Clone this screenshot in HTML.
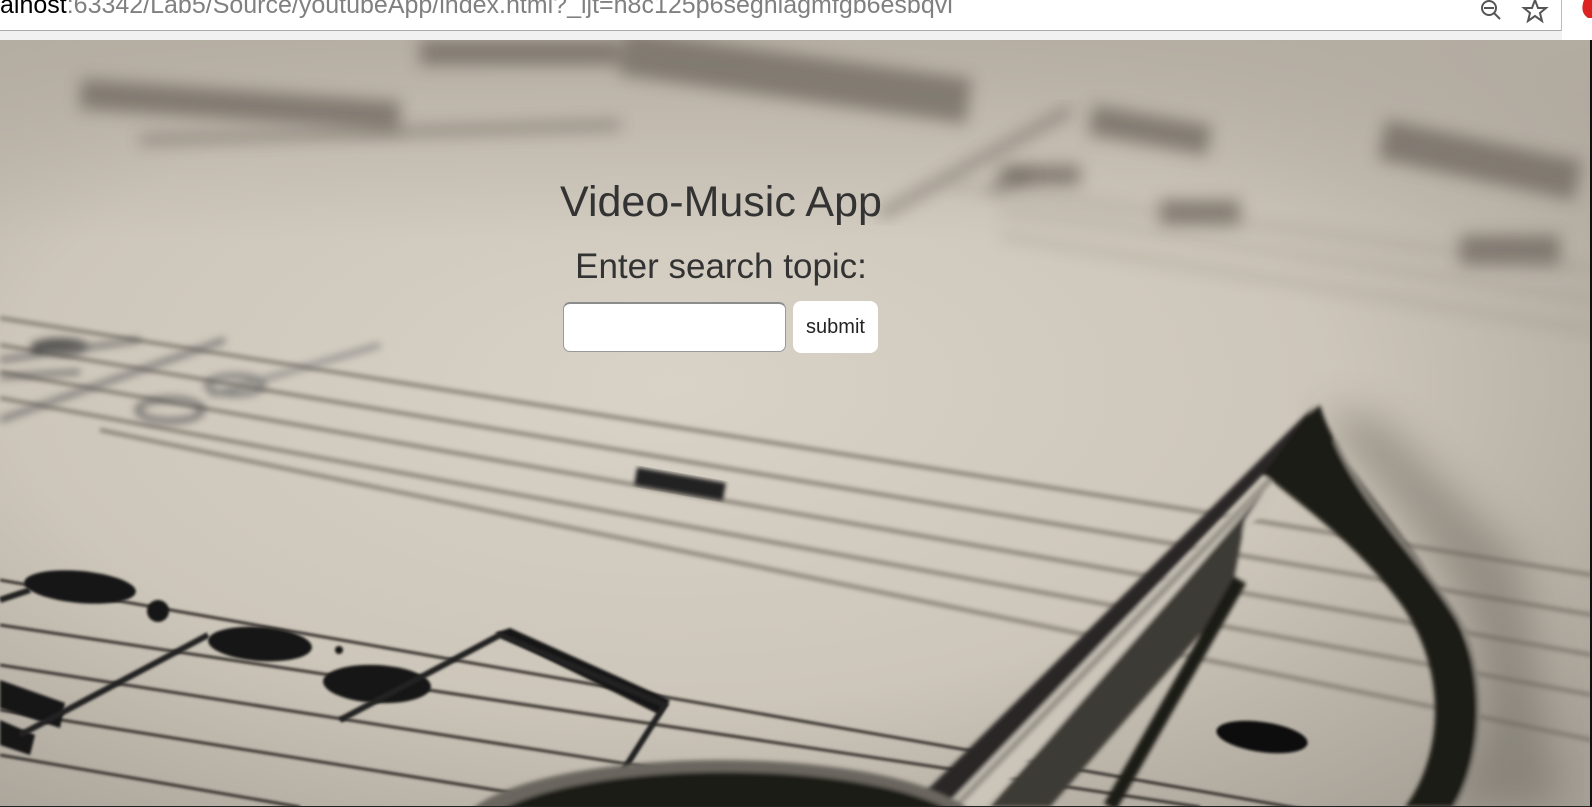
<!DOCTYPE html>
<html><head><meta charset="utf-8"><style>
html,body{margin:0;padding:0;width:1592px;height:807px;overflow:hidden;background:#fff;font-family:"Liberation Sans",Arial,sans-serif}
#bar{position:absolute;left:0;top:0;width:1592px;height:40px;background:#fff}
#url{position:absolute;left:0;top:-9px;font-size:25px;color:#808080;white-space:nowrap;letter-spacing:0}
#url b{font-weight:normal;color:#000}
#bar .strip{position:absolute;left:0;top:30px;width:1562px;height:10px;background:#f1f1f1;border-top:1px solid #a9a9a9;box-sizing:border-box}
#bar .edge{position:absolute;left:1561px;top:0;width:1px;height:31px;background:#bbb}
#bg{position:absolute;left:0;top:40px;width:1592px;height:767px;overflow:hidden}
#bg svg{display:block}
h1{position:absolute;left:0;width:1442px;top:177px;margin:0;text-align:center;font-weight:normal;font-size:43px;line-height:50px;color:#333}
.lab{position:absolute;left:0;width:1442px;top:247px;text-align:center;font-size:35px;line-height:40px;color:#333}
.inp{position:absolute;left:563px;top:302px;width:223px;height:50px;background:#fff;border-radius:7px;border:1px solid #999;border-top:2px solid #8c8c8c;box-sizing:border-box}
.btn{position:absolute;left:793px;top:301px;width:85px;height:52px;background:#fff;border-radius:8px;font-size:20px;color:#222;text-align:center;line-height:52px}
</style></head><body>
<div id="bg">
<svg width="1592" height="767" viewBox="0 40 1592 767" xmlns="http://www.w3.org/2000/svg">
<defs>
<radialGradient id="g" cx="0.42" cy="0.45" r="0.75">
<stop offset="0" stop-color="#d8d2c7"/><stop offset="0.55" stop-color="#cdc6ba"/><stop offset="1" stop-color="#a59f95"/></radialGradient>
<linearGradient id="tp" x1="0" y1="0" x2="0" y2="1"><stop offset="0" stop-color="#b4ada2" stop-opacity="0.9"/><stop offset="1" stop-color="#b4ada2" stop-opacity="0"/></linearGradient>
<filter id="b8"><feGaussianBlur stdDeviation="8"/></filter>
<filter id="b4"><feGaussianBlur stdDeviation="4"/></filter>
<filter id="b2"><feGaussianBlur stdDeviation="2"/></filter>
<filter id="b1"><feGaussianBlur stdDeviation="1.2"/></filter>
<filter id="b20"><feGaussianBlur stdDeviation="20"/></filter>
</defs>
<rect x="0" y="40" width="1592" height="767" fill="url(#g)"/>
<rect x="0" y="40" width="1592" height="200" fill="url(#tp)"/>
<g filter="url(#b8)" fill="#6e685f" opacity="0.75">
<rect x="80" y="90" width="320" height="30" transform="rotate(4 240 105)"/>
<rect x="420" y="40" width="200" height="25"/>
<rect x="620" y="55" width="350" height="45" transform="rotate(8 800 80)"/>
<rect x="1090" y="115" width="120" height="30" transform="rotate(10 1150 130)"/>
<rect x="1380" y="140" width="200" height="40" transform="rotate(12 1480 160)"/>
<rect x="1000" y="165" width="80" height="20"/>
<rect x="1160" y="200" width="80" height="25"/>
<rect x="1460" y="235" width="100" height="30"/>
</g>
<g filter="url(#b8)" stroke="#5f5a52" stroke-width="7" fill="none" opacity="0.7">
<path d="M880 215 L1070 110"/><path d="M990 190 L1030 175"/>
<path d="M140 140 L620 125"/>
</g>
<g filter="url(#b8)" stroke="#8b857b" stroke-width="4" fill="none" opacity="0.6">
<path d="M1000 210 L1592 300"/><path d="M1000 235 L1592 330"/><path d="M950 185 L1592 270"/>
</g>
<g filter="url(#b2)" stroke="#7d776d" stroke-width="4" fill="none" opacity="0.85">
<path d="M0 318 L1592 575"/><path d="M0 345 L1592 615"/><path d="M0 372 L1592 655"/><path d="M0 398 L1592 695"/><path d="M100 430 L1592 740"/>
</g>
<g filter="url(#b4)" opacity="0.75">
<path d="M0 420 L225 340" stroke="#666" stroke-width="6"/>
<path d="M210 395 L380 345" stroke="#777" stroke-width="5"/>
<ellipse cx="60" cy="347" rx="30" ry="9" fill="#333"/>
<ellipse cx="170" cy="410" rx="32" ry="11" fill="none" stroke="#555" stroke-width="6"/>
<ellipse cx="235" cy="385" rx="28" ry="9" fill="none" stroke="#666" stroke-width="6"/>
<path d="M0 360 L140 340 M0 377 L80 372" stroke="#555" stroke-width="5"/>
</g>
<rect x="635" y="475" width="90" height="18" fill="#222" filter="url(#b2)" transform="rotate(10 680 484)"/>
<g stroke="#3a3630" stroke-width="3" fill="none" filter="url(#b1)">
<path d="M0 580 L1592 860"/><path d="M0 625 L1200 807"/><path d="M0 665 L900 807"/><path d="M0 710 L600 807"/><path d="M0 755 L300 807"/>
</g>
<g fill="#161412" filter="url(#b1)">
<ellipse cx="80" cy="587" rx="56" ry="16" transform="rotate(5 80 587)"/>
<circle cx="158" cy="611" r="11"/>
<ellipse cx="260" cy="644" rx="52" ry="17" transform="rotate(4 260 644)"/>
<circle cx="339" cy="650" r="4"/>
<ellipse cx="377" cy="684" rx="54" ry="19" transform="rotate(3 377 684)"/>
<path d="M495 633 L510 628 L670 700 L660 715 Z"/>
<path d="M0 680 L65 703 L60 728 L0 708Z"/>
<path d="M0 720 L35 735 L30 755 L0 745Z"/>
</g>
<g stroke="#222" stroke-width="6" fill="none" filter="url(#b1)">
<path d="M0 600 L30 590"/>
<path d="M20 735 L208 635 M340 720 L500 635 L665 705 L600 807"/>
</g>
<path d="M1320 410 C1360 470 1420 520 1460 600 C1500 680 1480 760 1440 807 L1560 807 L1520 560 L1380 420Z" fill="#6d675e" opacity="0.5" filter="url(#b20)"/>
<g filter="url(#b2)">
<path d="M1320 405 C1335 460 1395 520 1440 590 C1495 675 1485 760 1455 807 L1405 807 C1440 760 1450 680 1405 610 C1360 545 1300 505 1265 475 L1240 480 L1290 430 Z" fill="#1d1b19"/>
<path d="M1335 440 C1365 510 1425 560 1465 630 C1490 700 1478 770 1455 807" stroke="#8a857c" stroke-width="4" fill="none"/>
<path d="M1265 478 L940 807 L985 807 L1275 500Z" fill="#cac4b9"/>
<path d="M1315 405 L910 807 L945 807 L1260 478 Z" fill="#2a2825"/>
<path d="M1265 490 L990 807 L1050 807 L1230 600 L1245 520 Z" fill="#3d3a35"/>
<path d="M1270 480 L955 807" stroke="#9b968c" stroke-width="7"/>
<path d="M1240 580 L1110 807" stroke="#1c1a18" stroke-width="14"/>
</g>
<ellipse cx="1262" cy="737" rx="46" ry="15" fill="#0c0b0a" filter="url(#b1)" transform="rotate(8 1262 737)"/>
<g filter="url(#b2)">
<ellipse cx="720" cy="830" rx="260" ry="70" fill="#6a665f"/>
<ellipse cx="725" cy="840" rx="250" ry="68" fill="#1b1a18"/>
</g>
<rect x="0" y="806" width="1592" height="1" fill="#222"/>
<rect x="1590" y="40" width="2" height="767" fill="#111"/>
</svg>
</div>
<div id="bar"><div id="url"><b>alhost</b>:63342/Lab5/Source/youtubeApp/index.html?_ijt=h8c125p6seghlagmfgb6esbqvl</div><div class="strip"></div><div class="edge"></div>
<svg style="position:absolute;left:1480px;top:0" width="112" height="30"><circle cx="9" cy="8" r="7" fill="none" stroke="#555" stroke-width="2"/><path d="M4 8h10M14 13l6 6" stroke="#555" stroke-width="2"/><path d="M55 0 L58 8 L66 8 L60 13 L62 21 L55 16 L48 21 L50 13 L44 8 L52 8Z" fill="none" stroke="#555" stroke-width="2"/><path d="M104 0 C101 8 102 14 108 18 L112 18 L112 0Z" fill="#d22"/></svg>
</div>
<h1>Video-Music App</h1>
<div class="lab">Enter search topic:</div>
<div class="inp"></div>
<div class="btn">submit</div>
</body></html>
